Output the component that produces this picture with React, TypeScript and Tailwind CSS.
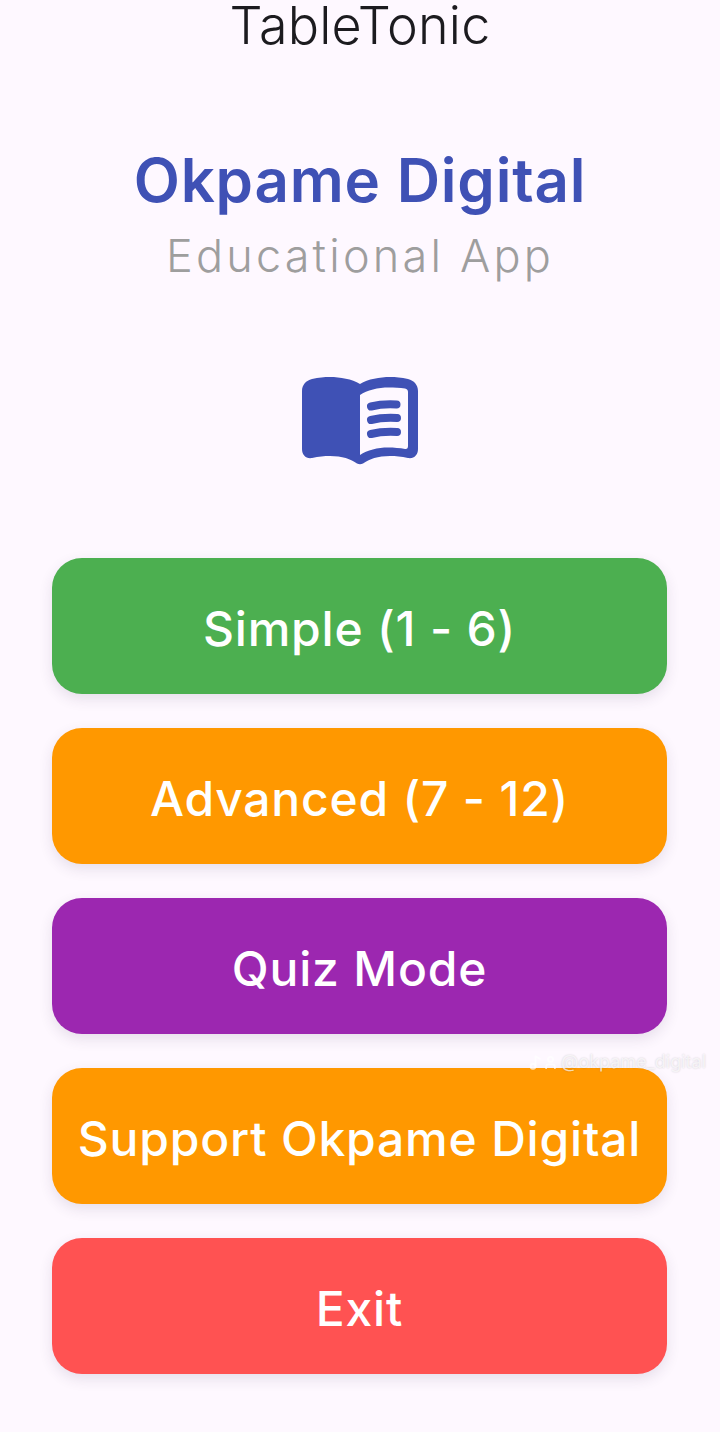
import { Music2, User } from 'lucide-react'

const buttons = [
  { label: 'Simple (1 - 6)', color: 'bg-[#4caf50]' },
  { label: 'Advanced (7 - 12)', color: 'bg-[#ff9800]' },
  { label: 'Quiz Mode', color: 'bg-[#9c27b0]' },
  { label: 'Support Okpame Digital', color: 'bg-[#ff9800]' },
  { label: 'Exit', color: 'bg-[#ff5252]' },
]

function BookIcon() {
  return (
    <svg width="116" height="88" viewBox="0 0 116 88" fill="none" className="block">
      <path
        fillRule="evenodd"
        fill="#3f51b5"
        d="M10 2C17 0.5 22 0 28 0C38 0 50 2 58 7C66 2 78 0 88 0C94 0 99 0.5 106 2C112 3.5 116 8 116 14V72C116 78 112 82 106 81C99 79.5 94 79 88 79C76 79 67 82 61 86.500C59 87.500 57 87.500 55 86.500C49 82 40 79 28 79C22 79 17 79.500 10 81C4 82 0 78 0 72V14C0 8 4 3.500 10 2ZM58 18V78C65 73 76 70.500 86 70.500C92 70.500 98 71 103 72C105 72.500 106 71 106 69V15C106 13 105 12 103 11.500C98 10.500 92 10.500 87 10.500C76 10.500 65 13 58 18Z"
      />
      <path d="M69 29.500C77 27.500 86 27 94.500 27.500" stroke="#3f51b5" strokeWidth="8" strokeLinecap="round" />
      <path d="M69 43C77 41 86 40.500 95 41" stroke="#3f51b5" strokeWidth="8" strokeLinecap="round" />
      <path d="M69 57C77 55 86 54.500 95 55" stroke="#3f51b5" strokeWidth="8" strokeLinecap="round" />
    </svg>
  )
}

export default function App() {
  return (
    <div className="relative flex h-[1432px] w-[720px] flex-col items-center overflow-hidden bg-[#fef8ff] font-['Inter','Noto_Sans',sans-serif]">
      <h1 className="mt-[-8px] h-[68px] text-[52px] leading-[68px] font-[350] tracking-[0.2px] text-[#1c1b1f]">TableTonic</h1>

      <h2 className="mt-[84px] h-[72px] text-[60px] leading-[72px] font-semibold tracking-[0.8px] text-[#3f51b5]">Okpame Digital</h2>
      <p className="mt-[9px] h-[62px] text-[45px] leading-[62px] font-light tracking-[3.2px] text-[#9e9e9e]">Educational App</p>

      <div className="mt-[90px]">
        <BookIcon />
      </div>

      <div className="mt-[93px] mr-[1px] flex w-[615px] flex-col gap-[34px]">
        {buttons.map((b) => (
          <button
            key={b.label}
            className={`flex h-[136px] w-full items-center justify-center rounded-[30px] pt-[6px] text-[48px] font-medium tracking-[0.8px] whitespace-nowrap text-white shadow-[0_5px_14px_rgba(60,40,80,0.12)] ${b.color}`}
          >
            {b.label}
          </button>
        ))}
      </div>

      {/* watermark over the page */}
      <div className="absolute top-[1050px] left-[528px] flex items-center text-[18px] leading-[24px] whitespace-nowrap text-white/70 [text-shadow:0_0_2px_rgba(0,0,0,0.18)]">
        <Music2 size={15} strokeWidth={3} />
        <User size={15} strokeWidth={3} className="mr-[3px]" />
        <span>@okpame_digital</span>
      </div>
    </div>
  )
}
